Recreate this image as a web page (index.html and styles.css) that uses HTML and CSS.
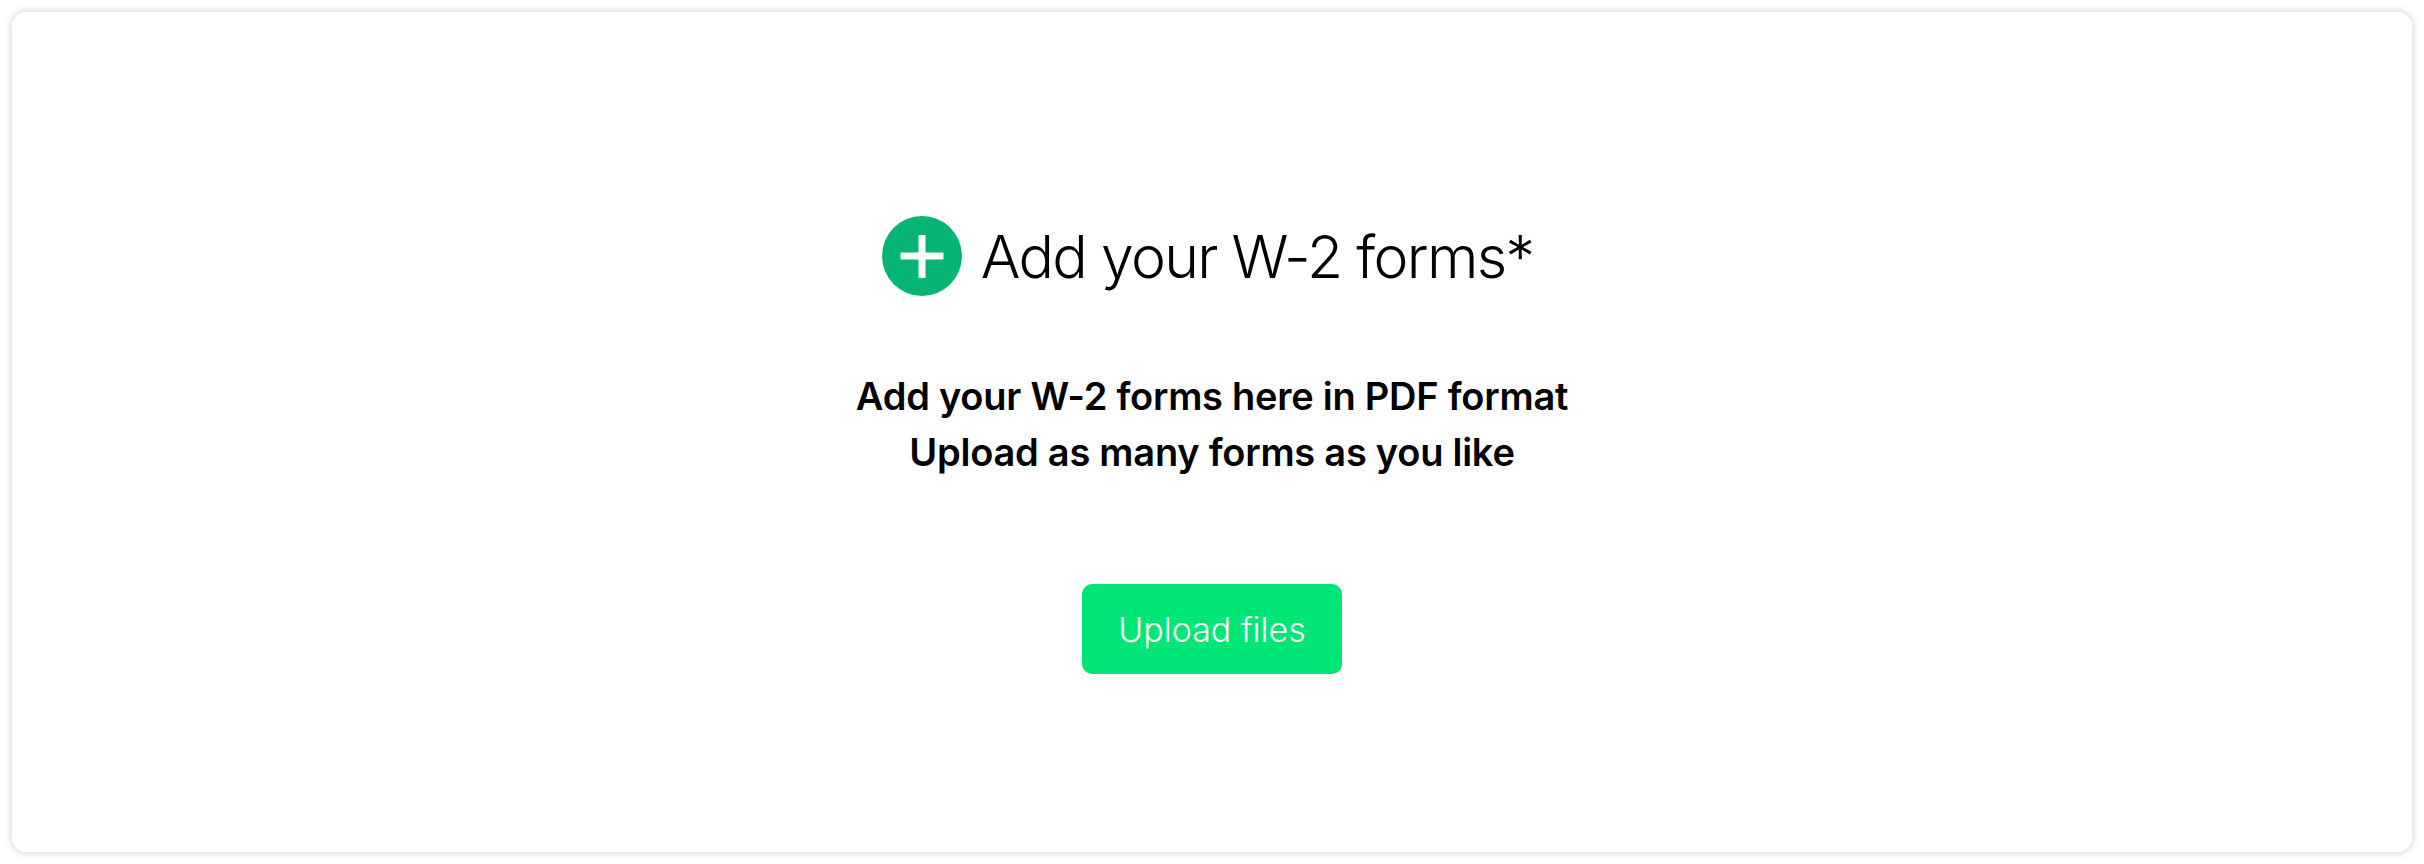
FILE: index.html
```html
<!DOCTYPE html>
<html>
<head>
    <title>Add your W-2 forms</title>
    <link rel="stylesheet" href="styles.css">
</head>
<body>
    <div class="card">
        <div class="heading">
            <svg class="plus-icon" width="80" height="80" viewBox="0 0 80 80">
                <circle cx="40" cy="40" r="40" fill="#06b574"/>
                <path d="M18.500 36.500H36.500V19H43.500V36.500H61.500V43.500H43.500V62H36.500V43.500H18.500Z" fill="#fff"/>
            </svg>
            <h1>Add your W-2 forms*</h1>
        </div>
        <p class="hint">Add your W-2 forms here in PDF format<br>Upload as many forms as you like</p>
        <button class="upload">Upload files</button>
    </div>
</body>
</html>
```

FILE: styles.css
```css
html, body {
    height: 100%;
}
body {
    margin: 0;
    padding: 12px;
    box-sizing: border-box;
    background-color: #fff;
    font-family: Inter, sans-serif;
}
.card {
    height: 100%;
    box-sizing: border-box;
    padding-top: 204px;
    display: flex;
    flex-direction: column;
    align-items: center;
    background-color: #fff;
    border-radius: 14px;
    box-shadow: 0 0 6px 2px rgba(0, 0, 0, 0.13);
}
.heading {
    display: flex;
    align-items: center;
    gap: 19px;
    height: 80px;
    padding-right: 9px;
}
.plus-icon {
    flex: none;
}
h1 {
    margin: 0;
    font-size: 59px;
    font-weight: 350;
    letter-spacing: -1.7px;
    color: #000;
    white-space: nowrap;
}
.hint {
    margin: 72px 0 0;
    font-size: 38px;
    font-weight: 600;
    letter-spacing: -0.25px;
    line-height: 56px;
    text-align: center;
    color: #000;
}
.upload {
    margin-top: 104px;
    width: 260px;
    height: 90px;
    border: none;
    border-radius: 10px;
    background-color: #00e676;
    color: #fff;
    font-family: Inter, sans-serif;
    font-size: 34px;
    font-weight: 300;
}
```
